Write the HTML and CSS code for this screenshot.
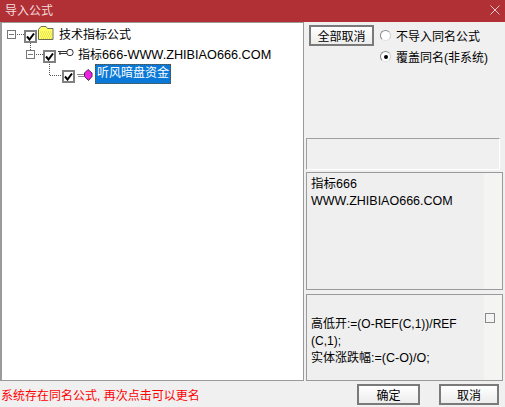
FILE: index.html
```html
<!DOCTYPE html>
<html lang="zh">
<head>
<meta charset="utf-8">
<title>导入公式</title>
<link rel="stylesheet" href="styles.css">
</head>
<body>
<div class="dialog">
  <header class="titlebar">
    <span class="title">导入公式</span>
    <svg class="close" width="10" height="10" viewBox="0 0 10 10"><path d="M0.500 0.500L9.500 9.500M9.500 0.500L0.500 9.500" stroke="#e9c9ca" stroke-width="1" fill="none"/></svg>
  </header>
  <div class="main">
    <div class="tree">
      <svg class="lines" width="80" height="70" viewBox="0 0 80 70">
        <path d="M17 12.500H24M30.500 21V28M36 32.500H43M49.500 40V53.500H62" stroke="#555" stroke-width="1" stroke-dasharray="1 1" fill="none"/>
      </svg>
      <div class="row row-root">
        <span class="expander"></span>
        <span class="check"><svg width="9" height="9" viewBox="0 0 9 9"><path d="M1 4.500L3.500 7.500L8 1.500" stroke="#000" stroke-width="2" fill="none"/></svg></span>
        <svg class="icon" width="16" height="14" viewBox="0 0 16 14"><path d="M0.500 3.500L3 0.500H8L9.500 2.500H15V13.500H0.500Z" fill="#ffff66" stroke="#6e6e50"/><path d="M2 6H14M3 8H14M2 10H14M3 12H14" stroke="#d8c840" stroke-dasharray="1 1"/></svg>
        <span class="label">技术指标公式</span>
      </div>
      <div class="row row-group">
        <span class="expander"></span>
        <span class="check"><svg width="9" height="9" viewBox="0 0 9 9"><path d="M1 4.500L3.500 7.500L8 1.500" stroke="#000" stroke-width="2" fill="none"/></svg></span>
        <svg class="icon" width="16" height="10" viewBox="0 0 16 10"><path d="M0 3.500H9M1 5.500H9M2 3V7" stroke="#333" fill="none"/><circle cx="12" cy="4.500" r="3.200" fill="#fff" stroke="#333"/></svg>
        <span class="label">指标<span class="latin">666-WWW.ZHIBIAO666.COM</span></span>
      </div>
      <div class="row row-leaf">
        <span class="check"><svg width="9" height="9" viewBox="0 0 9 9"><path d="M1 4.500L3.500 7.500L8 1.500" stroke="#000" stroke-width="2" fill="none"/></svg></span>
        <svg class="icon" width="16" height="12" viewBox="0 0 16 12"><path d="M0 5.500H7M1 7.500H7" stroke="#888" fill="none"/><path d="M11 0.500L15 4L15 7.500L11.500 11.500L7.500 7.500L7.500 4Z" fill="#f020e0" stroke="#502060"/></svg>
        <span class="label selected">听风暗盘资金</span>
      </div>
    </div>
    <div class="side">
      <div class="options">
        <button class="btn btn-all">全部取消</button>
        <div class="radios">
          <div class="radio"><span class="dot"></span>不导入同名公式</div>
          <div class="radio"><span class="dot on"></span>覆盖同名(非系统)</div>
        </div>
      </div>
      <div class="blank"></div>
      <div class="info">指标666<br>WWW.ZHIBIAO666.COM</div>
      <div class="code">
        <span class="tick"></span>
        <p>高低开:=(O-REF(C,1))/REF<br>(C,1);<br>实体涨跌幅<span class="latin-wide">:=(C-O)/O;</span></p>
      </div>
    </div>
  </div>
  <footer class="footer">
    <span class="status">系统存在同名公式, 再次点击可以更名</span>
    <button class="btn btn-ok">确定</button>
    <button class="btn btn-cancel">取消</button>
  </footer>
</div>
</body>
</html>
```
FILE: styles.css
```css
* { box-sizing: border-box; }
html, body { margin: 0; padding: 0; }
body {
  width: 505px;
  height: 407px;
  overflow: hidden;
  background: #f0f0f0;
  font-family: "Liberation Sans", "Noto Sans CJK SC", sans-serif;
  font-size: 12px;
  color: #000;
}
.dialog { width: 505px; height: 407px; display: flex; flex-direction: column; }
.titlebar {
  height: 22px;
  background: #b03036;
  color: #f3dcdc;
  display: flex;
  align-items: center;
  justify-content: space-between;
  padding: 0 5px 3px;
  font-size: 12px;
}
.main { height: 359px; display: flex; }
.tree {
  position: relative;
  width: 304px;
  height: 359px;
  background: #fff;
  border: 1px solid #9a9a9a;
  border-left-width: 2px;
}
.lines { position: absolute; left: -2px; top: -1px; }
.row { display: flex; align-items: center; height: 20px; font-size: 12px; white-space: nowrap; }
.row-root { padding-left: 5px; }
.row-group { padding-left: 24px; }
.row-leaf { padding-left: 60px; }
.latin { font-size: 12.700px; }
.expander {
  width: 9px;
  height: 9px;
  border: 1px solid #777;
  background: linear-gradient(#777, #777) center / 5px 1px no-repeat #fff;
  margin: 2px 8px 0 0;
}
.check {
  width: 13px;
  height: 13px;
  border: 2px solid #808080;
  background: #fff;
  display: flex;
  align-items: center;
  justify-content: center;
  margin-top: 7px;
}
.icon { margin: 0 4px 0 2px; flex: none; }
.row-root .icon { margin: 0 5px 0 1px; }
.row-leaf .icon { margin: 3px 2px 0 2px; }
.selected {
  background: #0a78d7;
  color: #fff;
  height: 20px;
  line-height: 18px;
  margin-top: 2px;
  padding: 0 2px;
  outline: 1px dotted #6a4a1a;
  outline-offset: -1px;
}
.side { flex: 1; padding-left: 2px; display: flex; flex-direction: column; }
.options { height: 116px; display: flex; padding: 3px 0 0 3px; }
.btn {
  background: linear-gradient(#fff, #ececec);
  border: 2px solid #7a7a7a;
  font: inherit;
  font-size: 12px;
  color: #000;
  padding: 0;
  height: 21px;
}
.btn-all { width: 65px; }
.radios { margin-left: 6px; }
.radio { display: flex; align-items: center; height: 21px; font-size: 12px; white-space: nowrap; }
.dot {
  width: 11px;
  height: 11px;
  border-radius: 50%;
  border: 1px solid #8a8a8a;
  border-bottom-color: #e4e4e4;
  border-right-color: #d0d0d0;
  background: #fff;
  margin-right: 5px;
  position: relative;
}
.dot.on::after {
  content: "";
  position: absolute;
  left: 2.500px;
  top: 2.500px;
  width: 4px;
  height: 4px;
  border-radius: 50%;
  background: #000;
}
.blank {
  width: 194px;
  height: 32px;
  border: 1px solid #a0a0a0;
  border-bottom-color: #fff;
  border-right-color: #fff;
  background: #f0f0f0;
}
.info, .code {
  width: 197px;
  background: linear-gradient(90deg, #efefef 177px, #f4f4f2 177px);
  border: 1px solid #9a9a9a;
  font-size: 12px;
  line-height: 17px;
  padding: 3px 4px;
}
.info { height: 118px; margin-top: 2px; font-size: 12.500px; }
.code { height: 87px; margin-top: 4px; position: relative; padding-top: 21px; }
.code p { margin: 0; }
.latin-wide { font-size: 12.500px; }
.tick {
  position: absolute;
  right: 7px;
  top: 18px;
  width: 10px;
  height: 10px;
  border: 1px solid #8a8a8a;
  background: #f4f4f4;
}
.footer { height: 26px; display: flex; align-items: center; }
.status { font-size: 12px; color: #f00; padding-left: 1px; margin-top: 1px; flex: 1; white-space: nowrap; }
.btn-ok { width: 63px; margin-right: 19px; }
.btn-cancel { width: 60px; margin-right: 6px; }
```
